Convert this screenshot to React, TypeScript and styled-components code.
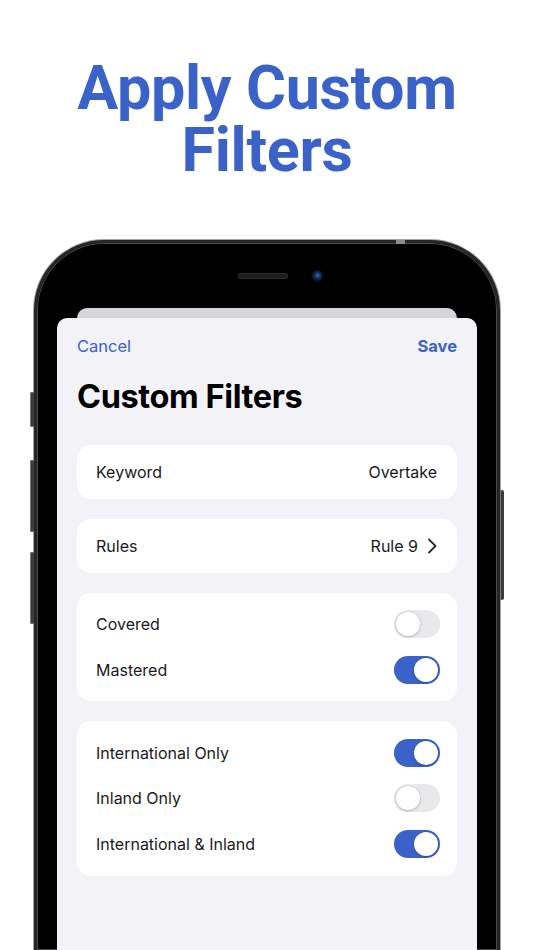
import React from 'react';
import styled, { createGlobalStyle } from 'styled-components';

const BLUE = '#3a62c8';

const GlobalStyle = createGlobalStyle`
  html, body {
    margin: 0;
    padding: 0;
    background: #ffffff;
  }
  body {
    width: 534px;
    height: 950px;
    overflow: hidden;
    font-family: Inter, "Noto Sans", sans-serif;
  }
`;

const Page = styled.div`
  display: flex;
  flex-direction: column;
  width: 534px;
  height: 950px;
  overflow: hidden;
`;

const Headline = styled.h1`
  flex: none;
  margin: 0;
  padding-top: 57px;
  height: 240px;
  box-sizing: border-box;
  text-align: center;
  font-family: Roboto, "Liberation Sans", sans-serif;
  font-weight: 700;
  font-size: 61px;
  line-height: 62px;
  letter-spacing: -0.3px;
  color: ${BLUE};
`;

const Phone = styled.div`
  position: relative;
  flex: 1;
  margin: 0 34px;
  padding: 0 20px;
  display: flex;
  flex-direction: column;
  background: #000;
  border: 3px solid #262626;
  border-bottom: none;
  border-radius: 70px 70px 0 0;
  box-shadow: 0 0 0 1px #a4a4a4, inset 0 0 0 1px #4a4a4a;
`;

const SideButton = styled.div<{ $side: 'left' | 'right'; $top: number; $height: number }>`
  position: absolute;
  ${({ $side }) => ($side === 'left' ? 'left: -7px;' : 'right: -7px;')}
  top: ${({ $top }) => $top}px;
  width: 4px;
  height: ${({ $height }) => $height}px;
  background: #3c3c3c;
  border-radius: 2px;
  box-shadow: inset 1px 0 0 #777;
`;

const Antenna = styled.div`
  position: absolute;
  top: -3px;
  right: 92px;
  width: 9px;
  height: 4px;
  background: #8a8a8a;
`;

const TopBar = styled.div`
  display: flex;
  align-items: center;
  justify-content: center;
  gap: 23px;
  height: 65px;
  padding-left: 26px;
`;

const Speaker = styled.div`
  width: 50px;
  height: 6px;
  border-radius: 3px;
  background: #1c1c1c;
  box-shadow: inset 0 0 0 1px #2c2c2c;
`;

const Camera = styled.div`
  width: 12px;
  height: 12px;
  border-radius: 50%;
  background: radial-gradient(circle at 55% 45%, #2f6cc4 0, #0f2a52 35%, #05070c 70%);
`;

const BackSheet = styled.div`
  height: 10px;
  margin: 0 20px;
  background: #d5d5da;
  border-radius: 10px 10px 0 0;
`;

const Sheet = styled.div`
  flex: 1;
  background: #f2f2f7;
  border-radius: 10px 10px 0 0;
  padding: 16px 20px 0;
`;

const NavRow = styled.div`
  display: flex;
  justify-content: space-between;
  align-items: center;
  height: 24px;
`;

const NavButton = styled.button<{ $bold?: boolean }>`
  border: none;
  background: none;
  padding: 0;
  font-family: Inter, "Noto Sans", sans-serif;
  font-size: 16.5px;
  font-weight: ${({ $bold }) => ($bold ? 700 : 400)};
  color: ${BLUE};
`;

const SheetTitle = styled.h2`
  margin: 19px 0 0;
  font-size: 32.5px;
  line-height: 40px;
  font-weight: 700;
  letter-spacing: -0.4px;
  color: #000;
`;

const Cards = styled.div`
  display: flex;
  flex-direction: column;
  gap: 20px;
  margin-top: 28px;
`;

const Card = styled.div<{ $pad?: number }>`
  display: flex;
  flex-direction: column;
  padding: ${({ $pad }) => $pad ?? 0}px 0;
  background: #fff;
  border-radius: 14px;
`;

const Row = styled.div<{ $height: number }>`
  display: flex;
  align-items: center;
  justify-content: space-between;
  height: ${({ $height }) => $height}px;
  padding: 0 17px 0 19px;
  font-size: 16px;
  color: #1a1a1c;
`;

const Value = styled.span`
  display: flex;
  align-items: center;
  gap: 9px;
  padding-right: 3px;
`;

const Track = styled.div<{ $on: boolean }>`
  position: relative;
  width: 46px;
  height: 28px;
  border-radius: 14px;
  background: ${({ $on }) => ($on ? BLUE : '#e9e9eb')};
`;

const Knob = styled.div<{ $on: boolean }>`
  position: absolute;
  top: 2px;
  left: ${({ $on }) => ($on ? 20 : 2)}px;
  width: 24px;
  height: 24px;
  border-radius: 50%;
  background: #fff;
  box-shadow: 0 1px 3px rgba(0, 0, 0, 0.22), 0 0 0 0.5px rgba(0, 0, 0, 0.06);
`;

function Toggle({ on }: { on: boolean }) {
  return (
    <Track $on={on}>
      <Knob $on={on} />
    </Track>
  );
}

function Chevron() {
  return (
    <svg width="10" height="16" viewBox="0 0 10 16" fill="none">
      <path d="M2 1.5L8.5 8L2 14.5" stroke="#2a2a2c" strokeWidth="1.8" strokeLinecap="round" strokeLinejoin="round" />
    </svg>
  );
}

const statusToggles = [
  { label: 'Covered', on: false },
  { label: 'Mastered', on: true },
];

const regionToggles = [
  { label: 'International Only', on: true },
  { label: 'Inland Only', on: false },
  { label: 'International & Inland', on: true },
];

export default function App() {
  return (
    <Page>
      <GlobalStyle />
      <Headline>
        Apply Custom
        <br />
        Filters
      </Headline>
      <Phone>
        <Antenna />
        <SideButton $side="left" $top={149} $height={35} />
        <SideButton $side="left" $top={217} $height={72} />
        <SideButton $side="left" $top={309} $height={72} />
        <SideButton $side="right" $top={247} $height={110} />
        <TopBar>
          <Speaker />
          <Camera />
        </TopBar>
        <BackSheet />
        <Sheet>
          <NavRow>
            <NavButton>Cancel</NavButton>
            <NavButton $bold>Save</NavButton>
          </NavRow>
          <SheetTitle>Custom Filters</SheetTitle>
          <Cards>
            <Card>
              <Row $height={54}>
                <span>Keyword</span>
                <Value>Overtake</Value>
              </Row>
            </Card>
            <Card>
              <Row $height={54}>
                <span>Rules</span>
                <Value>
                  Rule 9 <Chevron />
                </Value>
              </Row>
            </Card>
            <Card $pad={8}>
              {statusToggles.map((t) => (
                <Row key={t.label} $height={46}>
                  <span>{t.label}</span>
                  <Toggle on={t.on} />
                </Row>
              ))}
            </Card>
            <Card $pad={9}>
              {regionToggles.map((t) => (
                <Row key={t.label} $height={45.5}>
                  <span>{t.label}</span>
                  <Toggle on={t.on} />
                </Row>
              ))}
            </Card>
          </Cards>
        </Sheet>
      </Phone>
    </Page>
  );
}
